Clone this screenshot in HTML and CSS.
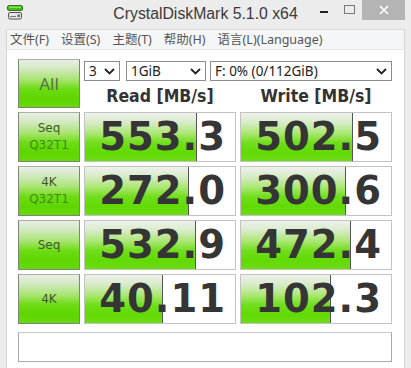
FILE: index.html
```html
<!DOCTYPE html>
<html lang="en">
<head>
<meta charset="utf-8">
<title>CrystalDiskMark 5.1.0 x64</title>
<link rel="stylesheet" href="styles.css">
</head>
<body>
<div class="window">
  <div class="titlebar">
    <svg class="appicon" width="16" height="16" viewBox="0 0 16 16">
      <rect x="0.5" y="0.5" width="15" height="5" rx="1.5" fill="#49b81e" stroke="#2f7d12"/>
      <rect x="2" y="1.5" width="12" height="1.5" fill="#8be05a"/>
      <rect x="1.5" y="7.5" width="13" height="6.5" rx="1.5" fill="#e6e6e6" stroke="#555"/>
      <line x1="3" y1="11.5" x2="9" y2="11.5" stroke="#777"/>
      <rect x="10.5" y="9.5" width="2.5" height="2.5" fill="#666"/>
    </svg>
    <div class="title">CrystalDiskMark 5.1.0 x64</div>
    <div class="controls">
      <span class="btn-min"><span class="dash"></span></span>
      <span class="btn-max"><span class="box"></span></span>
      <span class="btn-close">
        <svg width="10" height="10" viewBox="0 0 10 10"><path d="M1 1L9 9M9 1L1 9" stroke="#fff" stroke-width="1.6"/></svg>
      </span>
    </div>
  </div>
  <div class="client">
    <div class="menubar">
      <span class="menu">文件(F)</span>
      <span class="menu">设置(S)</span>
      <span class="menu">主题(T)</span>
      <span class="menu">帮助(H)</span>
      <span class="menu">语言(L)(Language)</span>
    </div>
    <div class="content">
      <div class="grid">
        <div class="btn all">All</div>
        <div class="topright">
          <div class="selects">
            <div class="sel s-count"><span>3</span><svg class="chev" width="11" height="7" viewBox="0 0 11 7"><path d="M1 1L5.5 5.5L10 1" fill="none" stroke="#222" stroke-width="1.8"/></svg></div>
            <div class="sel s-size"><span>1GiB</span><svg class="chev" width="11" height="7" viewBox="0 0 11 7"><path d="M1 1L5.5 5.5L10 1" fill="none" stroke="#222" stroke-width="1.8"/></svg></div>
            <div class="sel s-drive"><span>F: 0% (0/112GiB)</span><svg class="chev" width="11" height="7" viewBox="0 0 11 7"><path d="M1 1L5.5 5.5L10 1" fill="none" stroke="#222" stroke-width="1.8"/></svg></div>
          </div>
          <div class="headers">
            <div class="hdr">Read [MB/s]</div>
            <div class="hdr">Write [MB/s]</div>
          </div>
        </div>

        <div class="btn label two"><span class="l1">Seq</span><span class="l2">Q32T1</span></div>
        <div class="cell"><div class="bar" style="width:112px"></div><span class="val">553.3</span></div>
        <div class="cell"><div class="bar" style="width:112px"></div><span class="val">502.5</span></div>

        <div class="btn label two"><span class="l1">4K</span><span class="l2">Q32T1</span></div>
        <div class="cell"><div class="bar" style="width:104px"></div><span class="val">272.0</span></div>
        <div class="cell"><div class="bar" style="width:105px"></div><span class="val">300.6</span></div>

        <div class="btn label"><span class="l1">Seq</span></div>
        <div class="cell"><div class="bar" style="width:111px"></div><span class="val">532.9</span></div>
        <div class="cell"><div class="bar" style="width:110px"></div><span class="val">472.4</span></div>

        <div class="btn label"><span class="l1">4K</span></div>
        <div class="cell"><div class="bar" style="width:78px"></div><span class="val">40.11</span></div>
        <div class="cell"><div class="bar" style="width:90px"></div><span class="val">102.3</span></div>
      </div>
      <div class="comment"></div>
    </div>
  </div>
</div>
</body>
</html>
```
FILE: styles.css
```css
html, body {
  margin: 0;
  padding: 0;
  width: 411px;
  height: 368px;
  overflow: hidden;
  background: #ececec;
}
.window {
  width: 411px;
  height: 368px;
  display: flex;
  flex-direction: column;
}
.titlebar {
  height: 29px;
  position: relative;
  display: flex;
  align-items: center;
  justify-content: center;
  background: #ececec;
}
.appicon {
  position: absolute;
  left: 7px;
  top: 5px;
}
.title {
  font-family: "Liberation Sans", Arial, sans-serif;
  font-size: 15.8px;
  color: #3a3a3a;
  margin-top: -1px;
}
.controls {
  position: absolute;
  right: 6px;
  top: 0;
  height: 20px;
  display: flex;
}
.btn-min {
  width: 26px;
  height: 20px;
  display: flex;
  align-items: center;
  justify-content: center;
}
.btn-min .dash {
  width: 8px;
  height: 2px;
  background: #222;
  margin-top: 3px;
}
.btn-max {
  width: 25px;
  height: 20px;
  display: flex;
  align-items: center;
  justify-content: center;
}
.btn-max .box {
  width: 9px;
  height: 7px;
  border: 1px solid #7a7a7a;
  margin-top: -2px;
}
.btn-close {
  width: 43px;
  height: 20px;
  background: #b4b4b4;
  display: flex;
  align-items: center;
  justify-content: center;
}
.client {
  flex: 1;
  margin: 0 6px;
  border-left: 1px solid #d6d6d6;
  border-right: 1px solid #d6d6d6;
  display: flex;
  flex-direction: column;
  background: #fff;
}
.menubar {
  height: 19px;
  background: #f5f6f7;
  border-top: 1px solid #dcdcdc;
  border-bottom: 1px solid #e8e8e8;
  display: flex;
  align-items: center;
  padding-left: 2px;
  font-family: "Noto Sans", "Noto Sans CJK SC", sans-serif;
  font-size: 12.5px;
  color: #555;
}
.menu {
  padding: 0 6px 0 1px;
  margin-right: 5px;
  line-height: 19px;
}
.content {
  flex: 1;
  padding: 9px 0 0 11px;
  background: #fff;
}
.grid {
  display: grid;
  grid-template-columns: 62px 152px 152px;
  grid-template-rows: 49px 50px 50px 50px 50px;
  column-gap: 4px;
  row-gap: 4px;
}
.btn {
  box-sizing: border-box;
  border: 1px solid #7d8677;
  border-top-color: #a8b0a2;
  background: linear-gradient(to bottom, #e9eee6 0%, #d3e9c2 18%, #a8e470 42%, #6cdc12 62%, #5ed600 82%, #68d80c 100%);
  display: flex;
  flex-direction: column;
  align-items: center;
  justify-content: center;
}
.all {
  font-family: "Noto Sans", sans-serif;
  font-size: 17px;
  color: #567247;
}
.label {
  font-family: "DejaVu Sans", sans-serif;
  font-size: 12px;
  line-height: 17px;
}
.label .l1 {
  color: #3d5a2a;
}
.label .l2 {
  color: #3f8a14;
}
.topright {
  grid-column: 2 / 4;
  display: flex;
  flex-direction: column;
  padding-top: 2px;
}
.selects {
  display: flex;
  height: 20px;
}
.sel {
  box-sizing: border-box;
  height: 20px;
  border: 1px solid #8c8c8c;
  background: #fff;
  display: flex;
  align-items: center;
  justify-content: space-between;
  padding: 0 4px 0 4px;
  font-family: "Noto Sans", sans-serif;
  font-size: 13.5px;
  color: #222;
}
.s-count { width: 36px; margin-right: 6px; }
.s-size { width: 80px; margin-right: 4px; }
.s-drive { width: 182px; }
.chev { flex: none; }
.headers {
  display: flex;
  flex: 1;
  align-items: center;
}
.hdr {
  flex: 1;
  text-align: center;
  font-family: "DejaVu Sans Condensed", "DejaVu Sans", sans-serif;
  font-stretch: condensed;
  font-weight: bold;
  font-size: 17.5px;
  color: #333;
  padding-top: 3px;
}
.hdr + .hdr { margin-left: 4px; }
.cell {
  box-sizing: border-box;
  position: relative;
  border: 1px solid #c3c3c3;
  background: #fff;
  display: flex;
  align-items: center;
  justify-content: flex-end;
  padding-right: 9px;
}
.bar {
  position: absolute;
  left: 0;
  top: 0;
  bottom: 0;
  box-sizing: border-box;
  border-right: 1px solid #555;
  background: linear-gradient(to bottom, #eef1ec 0%, #d7ebc8 20%, #ace774 42%, #70de1a 62%, #62da04 82%, #6ddc14 100%);
}
.val {
  position: relative;
  font-family: "DejaVu Sans", sans-serif;
  font-weight: bold;
  font-size: 38.5px;
  letter-spacing: 1px;
  color: #353535;
  line-height: 1;
}
.comment {
  box-sizing: border-box;
  width: 374px;
  height: 30px;
  margin-top: 8px;
  border: 1px solid #a9a9a9;
  border-top-color: #c8c8c8;
  background: #fff;
}
```
